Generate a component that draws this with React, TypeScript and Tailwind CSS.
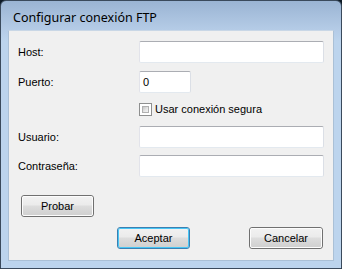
import React from "react";

const inputCls =
  "h-[22px] bg-white border border-t-[#abadb3] border-l-[#e2e3ea] border-r-[#dbdfe6] border-b-[#e3e9ef] rounded-[2px] px-[3px] text-[11px] leading-[20px] text-black";

function Btn({ label, def, w }: { label: string; def?: boolean; w: string }) {
  return (
    <div
      className={`${w} h-[22px] rounded-[3px] border ${
        def ? "border-[#3c7fb1]" : "border-[#707070]"
      } bg-[linear-gradient(#f2f2f2_0%,#ebebeb_45%,#dddddd_50%,#cfcfcf_100%)]`}
    >
      <div
        className={`h-full w-full rounded-[2px] flex items-center justify-center text-[11px] text-black border ${
          def ? "border-[#48c6f5]" : "border-[#fcfcfc]"
        }`}
      >
        {label}
      </div>
    </div>
  );
}

export default function App() {
  return (
    <div
      className="w-[342px] h-[269px] bg-[#0d1a26]"
      style={{ fontFamily: '"Liberation Sans", Arial, sans-serif' }}
    >
      <div className="w-[342px] h-[269px] rounded-t-[6px] border border-[#3a4a5c] bg-[linear-gradient(#9ab4d3_0px,#b4cbe6_28px,#bcd4ed_40px)] flex flex-col">
        <div
          className="h-[29px] flex items-center pl-[12px] pt-[6px] text-[12.5px] text-black"
          style={{ fontFamily: '"Noto Sans", "Open Sans", sans-serif' }}
        >
          Configurar conexión FTP
        </div>
        <div className="mx-[7px] h-[231px] bg-[#f0f0f0] border border-[#aac0d6] border-t-[#c9d7e6] relative">
          <div className="pt-[10px] pl-[9px]">
            <div className="flex items-center h-[22px]">
              <div className="w-[121px] text-[11px] text-black">Host:</div>
              <div className={`${inputCls} w-[185px]`}></div>
            </div>
            <div className="flex items-center h-[22px] mt-[8px]">
              <div className="w-[121px] text-[11px] text-black">Puerto:</div>
              <div className={`${inputCls} w-[52px]`}>0</div>
            </div>
            <div className="flex items-center h-[13px] mt-[10px] pl-[121px]">
              <div className="w-[13px] h-[13px] border border-[#8e8f8f] bg-white p-[2px]">
                <div className="w-full h-full bg-[linear-gradient(135deg,#c5c5c5,#e8e8e8_60%,#f2f2f2)] border border-[#b0b0b0]"></div>
              </div>
              <div className="ml-[3px] text-[11px] text-black">Usar conexión segura</div>
            </div>
            <div className="flex items-center h-[22px] mt-[10px]">
              <div className="w-[121px] text-[11px] text-black">Usuario:</div>
              <div className={`${inputCls} w-[185px]`}></div>
            </div>
            <div className="flex items-center h-[22px] mt-[7px]">
              <div className="w-[121px] text-[11px] text-black">Contraseña:</div>
              <div className={`${inputCls} w-[185px]`}></div>
            </div>
            <div className="mt-[18px] pl-[3px]">
              <Btn label="Probar" w="w-[73px]" />
            </div>
            <div className="mt-[10px] flex pl-[99px]">
              <Btn label="Aceptar" def w="w-[73px]" />
              <div className="ml-[59px]">
                <Btn label="Cancelar" w="w-[74px]" />
              </div>
            </div>
          </div>
        </div>
      </div>
    </div>
  );
}
